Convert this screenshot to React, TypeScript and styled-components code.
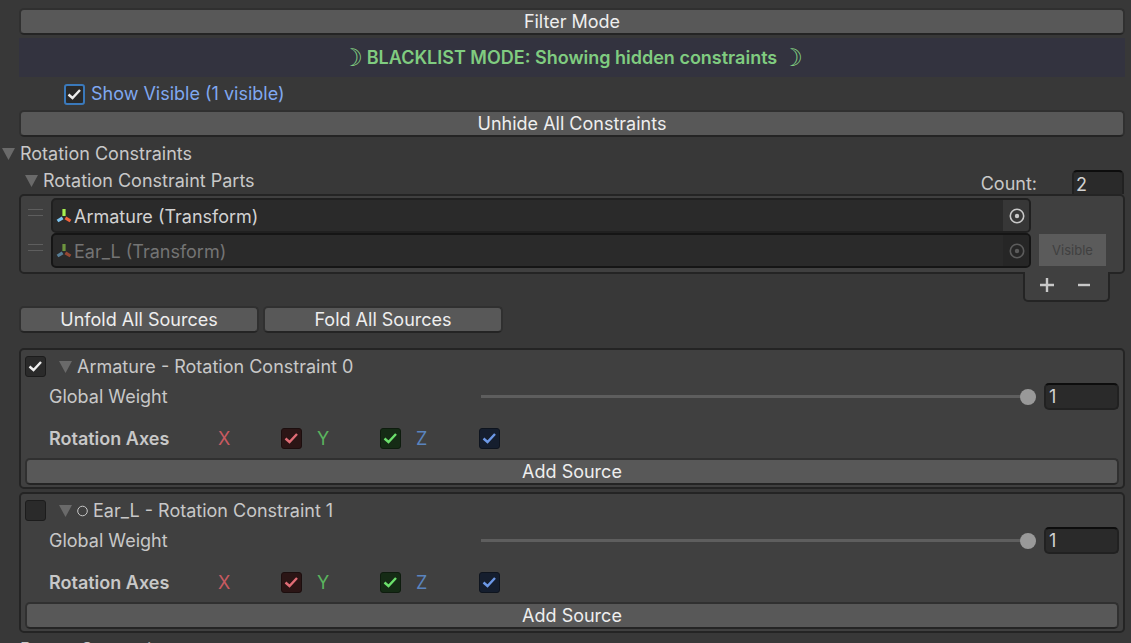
import React from "react";
import styled, { createGlobalStyle, css } from "styled-components";

const GlobalStyle = createGlobalStyle`
  * { box-sizing: border-box; }
  html { height: 100%; overflow: hidden; background: #383838; }
  body { margin: 0; background: #383838; }
  body, button, input {
    font-family: Inter, "Liberation Sans", sans-serif;
    font-size: 18px;
    line-height: 22px;
    color: #c8c8c8;
  }
`;

const Inspector = styled.main`
  display: flex;
  flex-direction: column;
  padding: 8px 6px 0 19px;
`;

const PushButton = styled.button<{ $fixed?: boolean }>`
  display: block;
  width: ${(p) => (p.$fixed ? "240px" : "100%")};
  height: 27px;
  padding: 0;
  border: 2px solid #303030;
  border-bottom-color: #242424;
  border-radius: 5px;
  background: #585858;
  color: #eeeeee;
`;

const Banner = styled.div`
  display: flex;
  align-items: center;
  justify-content: center;
  gap: 4px;
  height: 39px;
  margin: 3px 0 6px;
  background: #33333f;
  color: #80cc80;
  font-weight: 600;
`;

const Moon = styled.span`
  font-family: "DejaVu Sans", sans-serif;
  font-size: 24px;
  font-weight: 700;
`;

const CheckRow = styled.label`
  display: flex;
  align-items: center;
  gap: 6px;
  margin: 0 0 5px 45px;
  color: #80a8f0;
`;

const tones = {
  plain: { bg: "#2a2a2a", edge: "#1c1c1c", mark: "#eeeeee" },
  focus: { bg: "#2a2a2a", edge: "#3a79bb", mark: "#eeeeee" },
  red: { bg: "#2b1515", edge: "#1c0e0e", mark: "#e06c75" },
  green: { bg: "#152b15", edge: "#0e1c0e", mark: "#6ce06c" },
  blue: { bg: "#151e2e", edge: "#0e141e", mark: "#6c98e6" },
};
type Tone = keyof typeof tones;

const TickBox = styled.span<{ $tone: Tone }>`
  display: grid;
  flex: none;
  width: 21px;
  height: 21px;
  border: ${(p) => (p.$tone === "focus" ? 2 : 1)}px solid ${(p) => tones[p.$tone].edge};
  border-radius: 3px;
  background: ${(p) => tones[p.$tone].bg};
  color: ${(p) => tones[p.$tone].mark};
  place-items: center;

  > * { grid-area: 1 / 1; }
  input { appearance: none; width: 100%; height: 100%; margin: 0; }
  svg { visibility: hidden; pointer-events: none; }
  input:checked + svg { visibility: visible; }
`;

const Foldout = styled.button<{ $indent: number; $height?: number }>`
  display: flex;
  align-items: center;
  align-self: flex-start;
  gap: 5px;
  height: ${(p) => p.$height ?? 27}px;
  margin: 0 0 0 ${(p) => p.$indent}px;
  padding: 0;
  border: 0;
  background: none;
  white-space: nowrap;
`;

const PartsHeader = styled.div`
  display: flex;
  justify-content: space-between;
  height: 27px;
`;

const CountField = styled.label`
  display: flex;
  align-items: flex-start;
  gap: 35px;
  padding: 3px 1px 0 0;
  line-height: 28px;
`;

const NumberInput = styled.input<{ $open?: boolean }>`
  width: ${(p) => (p.$open ? 52 : 75)}px;
  height: 27px;
  padding: 0 3px;
  border: 2px solid #212121;
  border-top-color: #0d0d0d;
  border-radius: 5px;
  background: #2a2a2a;
  color: #d2d2d2;
  outline: none;
  ${(p) =>
    p.$open &&
    css`
      height: 24px;
      padding: 2px 2px 0;
      border-bottom: 0;
      border-radius: 5px 5px 0 0;
    `}
`;

const Panel = styled.section`
  border: 2px solid #242424;
  border-radius: 5px;
  background: #404040;
`;

const PartList = styled(Panel)`
  height: 80px;
  padding: 2px 17px 0 7px;
`;

const PartRow = styled.div`
  display: grid;
  grid-template-columns: 15px minmax(0, 1fr) 67px;
  column-gap: 8px;
  height: 35px;
  margin-right: -1px;
  padding-right: 1px;
`;

const Grip = styled.span`
  height: 7px;
  margin-top: 11px;
  border: solid #5e5e5e;
  border-width: 1px 0;
`;

const ObjectField = styled.div<{ $dim?: boolean }>`
  display: flex;
  align-items: center;
  height: 35px;
  padding-left: 3px;
  border: 2px solid ${(p) => (p.$dim ? "#151515" : "#202020")};
  border-radius: 5px;
  background: #2a2a2a;
  color: ${(p) => (p.$dim ? "#747474" : "#d2d2d2")};
  white-space: nowrap;
  svg { flex: none; }
`;

const ObjectName = styled.span`
  flex: 1;
  padding: 2px 0 0 2px;
`;

const Picker = styled.button<{ $dim?: boolean }>`
  display: grid;
  place-items: center;
  width: 26px;
  height: 31px;
  padding: 0 0 0 2px;
  border: 0;
  border-radius: 0 3px 3px 0;
  background: ${(p) => (p.$dim ? "#262626" : "#373737")};
  color: ${(p) => (p.$dim ? "#5c5c5c" : "#c8c8c8")};
`;

const VisibleButton = styled.button`
  height: 32px;
  margin-top: 1px;
  padding: 0;
  border: 0;
  background: #5b5b5b;
  color: #404040;
  font-size: 13px;
`;

const ListFooter = styled.div`
  display: flex;
  align-self: flex-end;
  align-items: center;
  justify-content: center;
  width: 87px;
  height: 30px;
  margin: -2px 15px 0 0;
  padding: 0 2px 2px 0;
  border: 2px solid #242424;
  border-top: 0;
  border-radius: 0 0 5px 5px;
  background: #404040;
  z-index: 1;
`;

const IconButton = styled.button`
  display: grid;
  place-items: center;
  width: 37px;
  height: 26px;
  padding: 0;
  border: 0;
  background: none;
`;

const ButtonRow = styled.div`
  display: flex;
  gap: 4px;
  margin: 4px 0 15px;
`;

const ConstraintPanel = styled(Panel)`
  height: 141px;
  margin-bottom: 3px;
  padding: 5px 4px 0;
`;

const TitleRow = styled.div`
  display: flex;
  align-items: flex-start;
  height: 22px;
  padding-top: 1px;
`;

const WeightRow = styled.label`
  display: grid;
  grid-template-columns: 432px minmax(0, 1fr) 75px;
  align-items: center;
  height: 27px;
  margin-top: 6px;
  padding-left: 24px;
`;

const Slider = styled.input`
  appearance: none;
  width: 100%;
  height: 16px;
  margin: 0;
  background: linear-gradient(#5e5e5e, #5e5e5e) center / 100% 3px no-repeat;
  &::-webkit-slider-thumb {
    appearance: none;
    width: 16px;
    height: 16px;
    border-radius: 50%;
    background: #999999;
  }
`;

const SliderCell = styled.span`
  display: flex;
  padding-right: 8px;
`;

const AxesRow = styled.fieldset`
  display: flex;
  align-items: center;
  height: 21px;
  margin: 18px 0 9px;
  padding: 0 0 0 24px;
  border: 0;
`;

const AxesName = styled.strong`
  width: 169px;
  font-weight: 600;
`;

const Axis = styled.label<{ $color: string }>`
  display: flex;
  justify-content: space-between;
  align-items: center;
  width: 84px;
  margin-right: 15px;
  color: ${(p) => p.$color};
`;

const Gap = styled.div`
  height: 3px;
`;

const Arrow = () => (
  <svg width="13" height="12" viewBox="0 0 13 12" aria-hidden="true">
    <path d="M0 0H13L6.5 12Z" fill="#6a6a6a" />
  </svg>
);

const Tick = ({ tone, label, checked = true }: { tone: Tone; label?: string; checked?: boolean }) => (
  <TickBox $tone={tone}>
    <input type="checkbox" defaultChecked={checked} aria-label={label} />
    <svg width="15" height="13" viewBox="0 0 15 13" aria-hidden="true">
      <path d="M1.5 6.5L5.5 10L13 2" fill="none" stroke="currentColor" strokeWidth="2.4" />
    </svg>
  </TickBox>
);

const TransformIcon = ({ dim }: { dim?: boolean }) => (
  <svg width="16" height="16" viewBox="0 0 16 16" strokeWidth="3.2" opacity={dim ? 0.55 : 1} aria-hidden="true">
    <path d="M8 1V8" stroke="#a5ee50" />
    <path d="M6.6 9.8L1.5 13" stroke="#7cc4f0" />
    <path d="M9.4 9.8L14.5 13" stroke="#f0623c" />
  </svg>
);

const Target = () => (
  <svg width="16" height="16" viewBox="0 0 16 16" aria-hidden="true">
    <circle cx="8" cy="8" r="6.7" fill="none" stroke="currentColor" strokeWidth="1.6" />
    <circle cx="8" cy="8" r="2.2" fill="currentColor" />
  </svg>
);

const Part = ({ name, dim }: { name: string; dim?: boolean }) => (
  <PartRow>
    <Grip />
    <ObjectField $dim={dim}>
      <TransformIcon dim={dim} />
      <ObjectName>{name}</ObjectName>
      <Picker $dim={dim} aria-label={`Select ${name}`}>
        <Target />
      </Picker>
    </ObjectField>
    {dim && <VisibleButton disabled>Visible</VisibleButton>}
  </PartRow>
);

const HollowDot = () => (
  <svg width="11" height="12" viewBox="0 0 11 12" aria-hidden="true">
    <circle cx="5.5" cy="6" r="4.8" fill="none" stroke="#c8c8c8" />
  </svg>
);

const Constraint = ({ title, active }: { title: string; active: boolean }) => (
  <ConstraintPanel>
    <TitleRow>
      <Tick tone="plain" label={`Enable ${title}`} checked={active} />
      <Foldout $indent={13} $height={21}>
        <Arrow />
        {!active && <HollowDot />}
        {title}
      </Foldout>
    </TitleRow>
    <WeightRow>
      Global Weight
      <SliderCell>
        <Slider type="range" min="0" max="1" step="0.01" defaultValue="1" aria-label="Global Weight" />
      </SliderCell>
      <NumberInput defaultValue="1" aria-label="Global Weight value" />
    </WeightRow>
    <AxesRow>
      <AxesName>Rotation Axes</AxesName>
      <Axis $color="#c85a60">X<Tick tone="red" /></Axis>
      <Axis $color="#5ab45e">Y<Tick tone="green" /></Axis>
      <Axis $color="#5a84be">Z<Tick tone="blue" /></Axis>
    </AxesRow>
    <PushButton>Add Source</PushButton>
  </ConstraintPanel>
);

export default function App() {
  return (
    <>
      <GlobalStyle />
      <Inspector>
        <PushButton>Filter Mode</PushButton>
        <Banner>
          <Moon>☽</Moon>
          <span>BLACKLIST MODE: Showing hidden constraints</span>
          <Moon>☽</Moon>
        </Banner>
        <CheckRow>
          <Tick tone="focus" />
          Show Visible (1 visible)
        </CheckRow>
        <PushButton>Unhide All Constraints</PushButton>
        <Gap />
        <Foldout $indent={-17}>
          <Arrow />
          Rotation Constraints
        </Foldout>
        <PartsHeader>
          <Foldout $indent={6}>
            <Arrow />
            Rotation Constraint Parts
          </Foldout>
          <CountField>
            Count:
            <NumberInput $open defaultValue="2" />
          </CountField>
        </PartsHeader>
        <PartList>
          <Part name="Armature (Transform)" />
          <Part name="Ear_L (Transform)" dim />
        </PartList>
        <ListFooter>
          <IconButton aria-label="Add">
            <svg width="16" height="16" viewBox="0 0 16 16" stroke="#c8c8c8" strokeWidth="2.4">
              <path d="M8 1V15M1 8H15" />
            </svg>
          </IconButton>
          <IconButton aria-label="Remove">
            <svg width="16" height="16" viewBox="0 0 16 16" stroke="#c8c8c8" strokeWidth="2.4">
              <path d="M2 8H14" />
            </svg>
          </IconButton>
        </ListFooter>
        <ButtonRow>
          <PushButton $fixed>Unfold All Sources</PushButton>
          <PushButton $fixed>Fold All Sources</PushButton>
        </ButtonRow>
        <Constraint title="Armature - Rotation Constraint 0" active />
        <Constraint title="Ear_L - Rotation Constraint 1" active={false} />
        <Foldout $indent={-17}>
          <Arrow />
          Parent Constraints
        </Foldout>
      </Inspector>
    </>
  );
}
